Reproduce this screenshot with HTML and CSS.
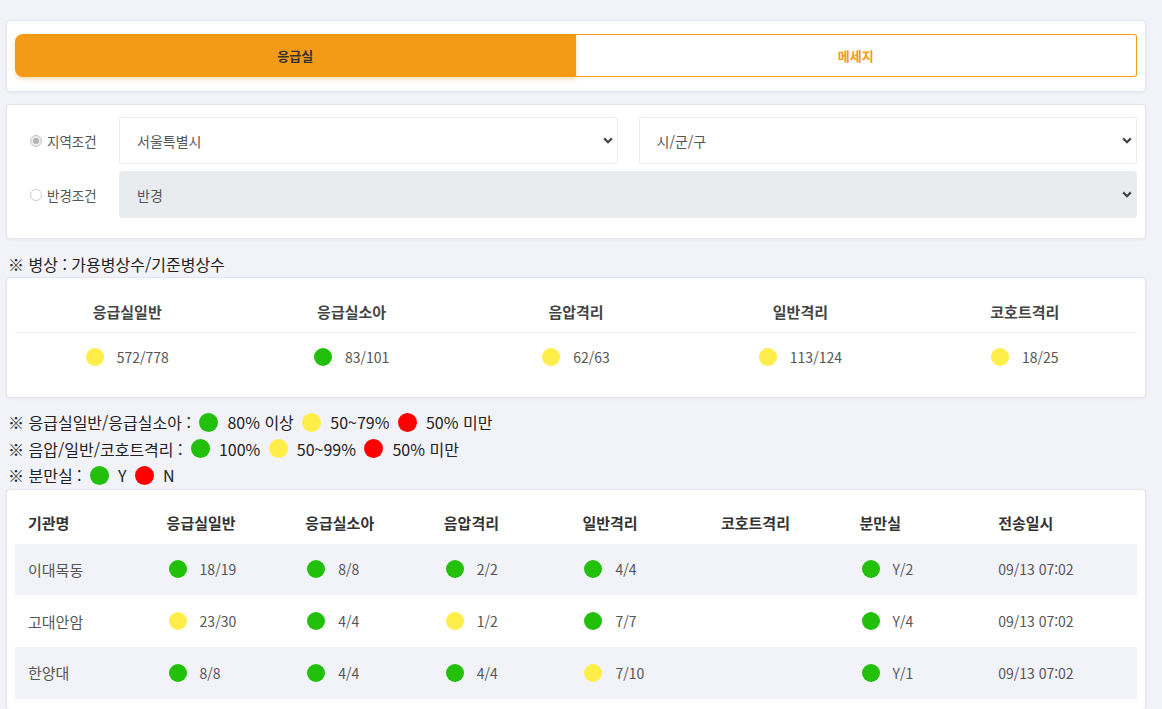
FILE: index.html
```html
<!DOCTYPE html>
<html lang="ko">
<head>
<meta charset="utf-8">
<title>응급실</title>
<link rel="stylesheet" href="styles.css">
</head>
<body>
<div class="page">
  <section class="card tabs-card">
    <div class="tabs">
      <button class="tab tab-active">응급실</button>
      <button class="tab tab-idle">메세지</button>
    </div>
  </section>

  <section class="card filter-card">
    <div class="filter-row">
      <label class="radio-label"><span class="radio radio-checked"></span>지역조건</label>
      <div class="selects two">
        <select class="sel"><option>서울특별시</option></select>
        <select class="sel"><option>시/군/구</option></select>
      </div>
    </div>
    <div class="filter-row">
      <label class="radio-label"><span class="radio"></span>반경조건</label>
      <div class="selects">
        <select class="sel sel-disabled"><option>반경</option></select>
      </div>
    </div>
  </section>

  <p class="note">※ 병상 : 가용병상수/기준병상수</p>

  <section class="card summary-card">
    <div class="summary-grid">
      <div class="sum-head">응급실일반</div>
      <div class="sum-head">응급실소아</div>
      <div class="sum-head">음압격리</div>
      <div class="sum-head">일반격리</div>
      <div class="sum-head">코호트격리</div>
      <div class="sum-val"><span class="dot yellow"></span>572/778</div>
      <div class="sum-val"><span class="dot green"></span>83/101</div>
      <div class="sum-val"><span class="dot yellow"></span>62/63</div>
      <div class="sum-val"><span class="dot yellow"></span>113/124</div>
      <div class="sum-val"><span class="dot yellow"></span>18/25</div>
    </div>
  </section>

  <div class="legend">
    <p class="legend-line">※ 응급실일반/응급실소아 : <span class="ldot green"></span>80% 이상 <span class="ldot yellow"></span>50~79% <span class="ldot red"></span>50% 미만</p>
    <p class="legend-line">※ 음압/일반/코호트격리 : <span class="ldot green"></span>100% <span class="ldot yellow"></span>50~99% <span class="ldot red"></span>50% 미만</p>
    <p class="legend-line">※ 분만실 : <span class="ldot green"></span>Y <span class="ldot red"></span>N</p>
  </div>

  <section class="card table-card">
    <div class="grid-table">
      <div class="trow thead">
        <div class="th">기관명</div>
        <div class="th">응급실일반</div>
        <div class="th">응급실소아</div>
        <div class="th">음압격리</div>
        <div class="th">일반격리</div>
        <div class="th">코호트격리</div>
        <div class="th">분만실</div>
        <div class="th">전송일시</div>
      </div>
      <div class="trow stripe">
        <div class="td name">이대목동</div>
        <div class="td"><span class="dot green"></span>18/19</div>
        <div class="td"><span class="dot green"></span>8/8</div>
        <div class="td"><span class="dot green"></span>2/2</div>
        <div class="td"><span class="dot green"></span>4/4</div>
        <div class="td"></div>
        <div class="td"><span class="dot green"></span>Y/2</div>
        <div class="td date">09/13 07:02</div>
      </div>
      <div class="trow">
        <div class="td name">고대안암</div>
        <div class="td"><span class="dot yellow"></span>23/30</div>
        <div class="td"><span class="dot green"></span>4/4</div>
        <div class="td"><span class="dot yellow"></span>1/2</div>
        <div class="td"><span class="dot green"></span>7/7</div>
        <div class="td"></div>
        <div class="td"><span class="dot green"></span>Y/4</div>
        <div class="td date">09/13 07:02</div>
      </div>
      <div class="trow stripe">
        <div class="td name">한양대</div>
        <div class="td"><span class="dot green"></span>8/8</div>
        <div class="td"><span class="dot green"></span>4/4</div>
        <div class="td"><span class="dot green"></span>4/4</div>
        <div class="td"><span class="dot yellow"></span>7/10</div>
        <div class="td"></div>
        <div class="td"><span class="dot green"></span>Y/1</div>
        <div class="td date">09/13 07:02</div>
      </div>
    </div>
  </section>
</div>
</body>
</html>
```

FILE: styles.css
```css
* { box-sizing: border-box; }

html, body {
  margin: 0;
  padding: 0;
  background: #f2f3f8;
  overflow: hidden;
}

body {
  font-family: "Noto Sans CJK KR", "Noto Sans", sans-serif;
  color: #222;
}

.page {
  width: 1140px;
  margin-left: 6px;
  padding-top: 20px;
}

.card {
  background: #fff;
  border: 1px solid #e4e5ef;
  border-radius: 4px;
  box-shadow: 0 1px 3px rgba(60, 60, 110, 0.06);
}

/* tabs */
.tabs-card {
  padding: 13px 8px 14px;
  margin-bottom: 12px;
}

.tabs {
  display: flex;
  height: 43px;
}

.tab {
  flex: 1;
  font-family: inherit;
  font-size: 13px;
  font-weight: 700;
  border: none;
  margin: 0;
  padding: 0;
  cursor: pointer;
}

.tab-active {
  background: #f39a17;
  color: #333;
  border-radius: 8px 0 0 8px;
  box-shadow: 0 2px 4px rgba(243, 154, 23, 0.35);
  position: relative;
}

.tab-idle {
  background: #fff;
  color: #f39a17;
  border: 1px solid #f39a17;
  border-left: none;
  border-radius: 0 3px 3px 0;
}

/* filter */
.filter-card {
  padding: 12px 8px 20px;
  display: flex;
  flex-direction: column;
  gap: 7px;
}

.filter-row {
  display: flex;
  align-items: center;
}

.radio-label {
  width: 104px;
  padding-left: 15px;
  display: flex;
  align-items: center;
  font-size: 13.5px;
  color: #555;
}

.radio {
  width: 12px;
  height: 12px;
  border-radius: 50%;
  border: 1px solid #cfcfcf;
  background: #fff;
  margin-right: 5px;
  position: relative;
}

.radio-checked {
  background: #ececec;
  border-color: #c4c4c4;
}

.radio-checked::after {
  content: "";
  position: absolute;
  left: 2px;
  top: 2px;
  width: 6px;
  height: 6px;
  border-radius: 50%;
  background: #b4b4b4;
}

.selects {
  flex: 1;
  display: flex;
  gap: 21px;
}

.sel {
  flex: 1;
  height: 47px;
  font-family: inherit;
  font-size: 14px;
  color: #555;
  padding: 0 30px 0 17px;
  border: 1px solid #ececf0;
  border-radius: 3px;
  background-color: #fff;
  background-image: url("data:image/svg+xml,%3Csvg xmlns='http://www.w3.org/2000/svg' width='10' height='7' viewBox='0 0 10 7'%3E%3Cpath d='M1.2 1.4 5 5.2 8.8 1.4' fill='none' stroke='%23444' stroke-width='2.2'/%3E%3C/svg%3E");
  background-repeat: no-repeat;
  background-position: right 4px center;
  background-position-x: calc(100% - 4px);
  -webkit-appearance: none;
  appearance: none;
  outline: none;
}

.sel-disabled {
  background-color: #e9ecef;
}

/* note */
.note {
  margin: 0;
  padding-top: 13px;
  line-height: 25px;
  height: 38px;
  font-size: 16px;
  padding-left: 2px;
  color: #222;
}

/* summary */
.summary-card {
  padding: 12px 8px 16px;
}

.summary-grid {
  display: grid;
  grid-template-columns: repeat(5, 1fr);
}

.sum-head {
  height: 43px;
  display: flex;
  align-items: center;
  justify-content: center;
  font-size: 15px;
  font-weight: 700;
  color: #444;
  border-bottom: 1px solid #eeeef2;
}

.sum-val {
  height: 48px;
  display: flex;
  align-items: center;
  justify-content: center;
  font-size: 14px;
  color: #555;
}

.dot {
  display: inline-block;
  width: 18px;
  height: 18px;
  border-radius: 50%;
  margin-right: 13px;
  flex: none;
}

.green { background: #22c00b; }
.yellow { background: #ffee4a; }
.red { background: #ff0000; }

/* legend */
.legend {
  padding-top: 11px;
  padding-left: 2px;
}

.legend-line {
  margin: 0;
  height: 26.5px;
  display: flex;
  align-items: center;
  font-size: 16px;
  color: #222;
  white-space: pre;
}

.ldot {
  display: inline-block;
  width: 19px;
  height: 19px;
  border-radius: 50%;
  margin: 0 9px 0 4px;
}

/* table */
.table-card {
  padding: 12px 8px 10px;
}

.trow {
  display: grid;
  grid-template-columns: repeat(7, 138.6px) 1fr;
  height: 51.7px;
  align-items: center;
}

.thead {
  height: 42px;
}

.stripe {
  background: #f2f3f8;
}

.th {
  padding-left: 13px;
  font-size: 15px;
  font-weight: 700;
  color: #333;
}

.td {
  padding-left: 13px;
  font-size: 14px;
  color: #555;
  display: flex;
  align-items: center;
}

.td .dot {
  margin-left: 2px;
}

.td.name {
  font-size: 15px;
}
```
